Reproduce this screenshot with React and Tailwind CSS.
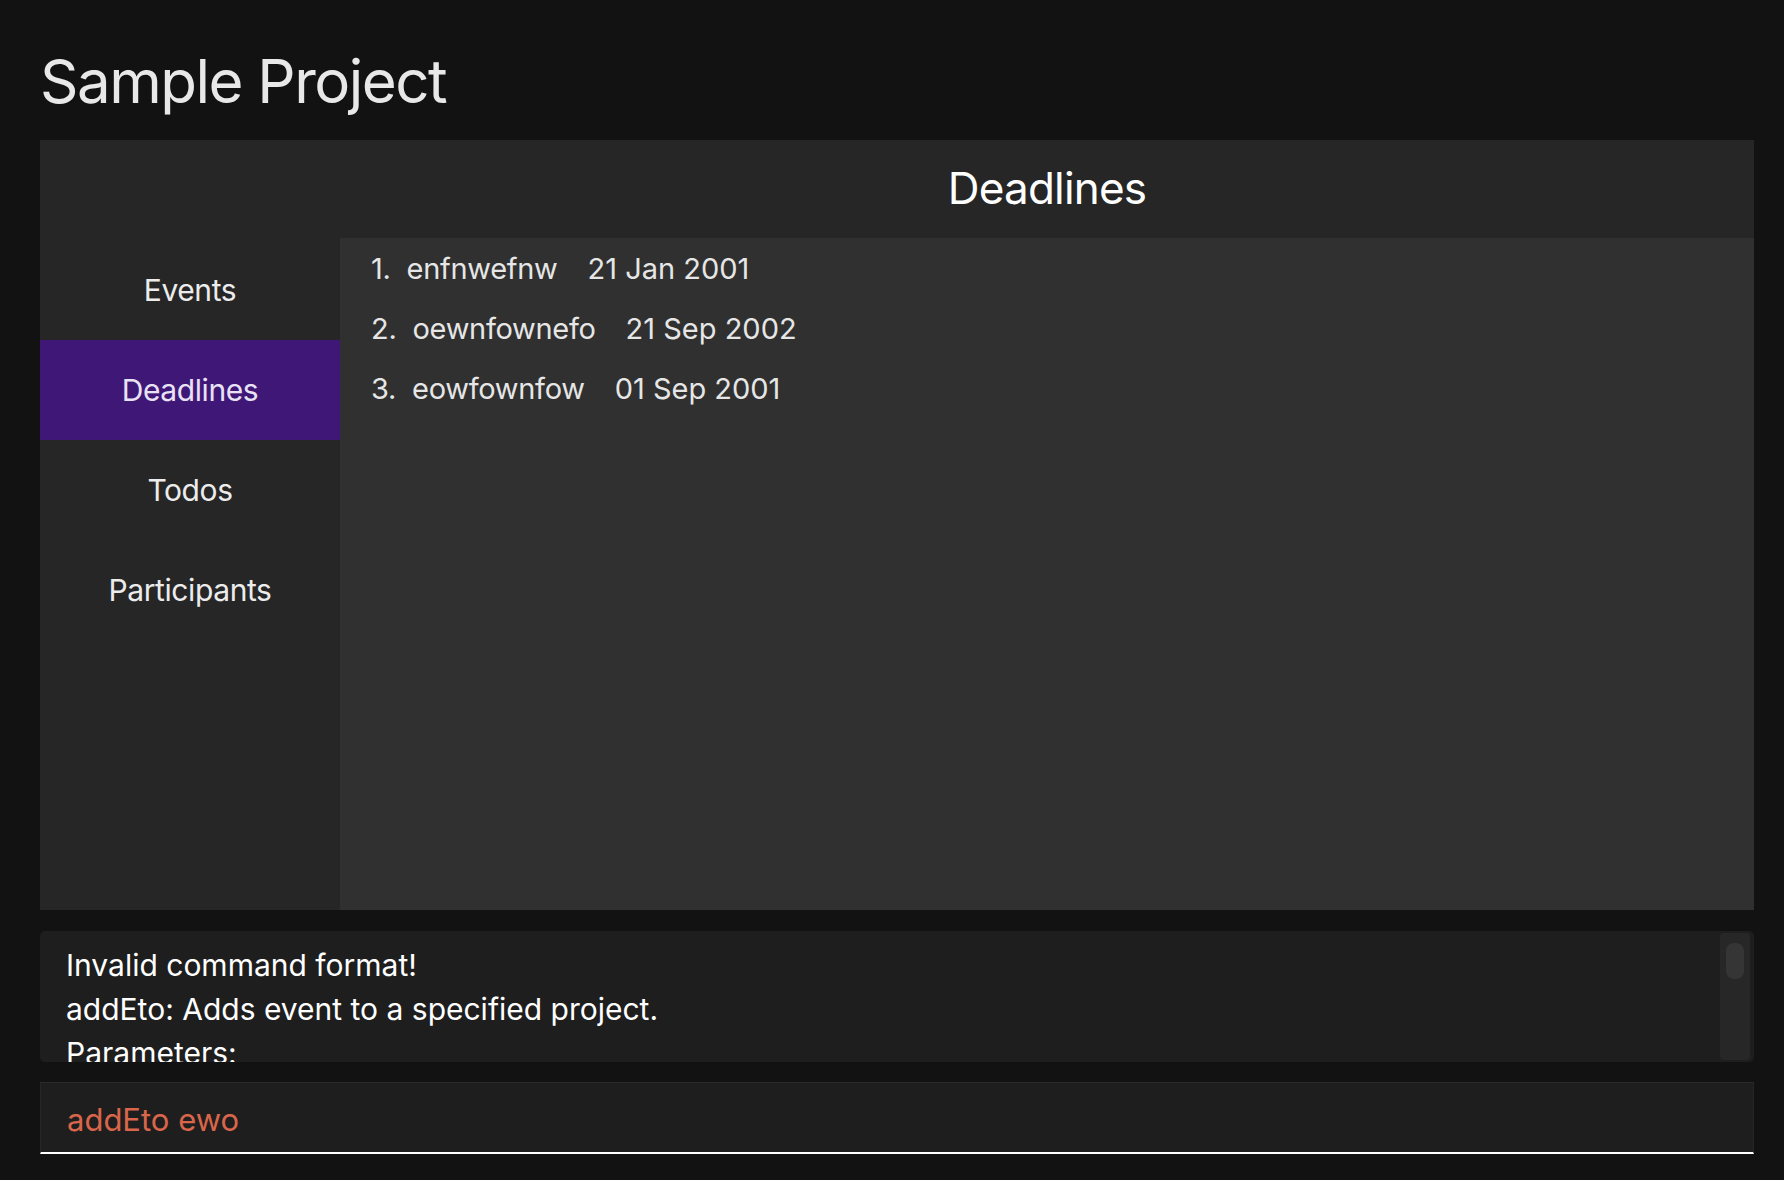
const TABS = ['Events', 'Deadlines', 'Todos', 'Participants'];

const DEADLINES = [
  { name: 'enfnwefnw', date: '21 Jan 2001' },
  { name: 'oewnfownefo', date: '21 Sep 2002' },
  { name: 'eowfownfow', date: '01 Sep 2001' },
];

const FONT = { fontFamily: 'Inter, "Noto Sans", sans-serif' };

export default function App() {
  const active = 'Deadlines';

  return (
    <div style={FONT} className="flex h-[1180px] w-full flex-col bg-[#121212] pr-[30px] pl-[40px] text-white">
      <h1 className="pt-[40px] pb-[17px] text-[60px] leading-[83px] tracking-[-1.5px] text-[#e8e8e8]">Sample Project</h1>

      <section className="flex h-[770px] bg-[#262626]">
        <aside className="flex w-[300px] shrink-0 flex-col pt-[100px]">
          {TABS.map((tab) => (
            <div
              key={tab}
              className={`flex h-[100px] items-center justify-center text-[30px] tracking-[-0.4px] ${active === tab ? 'bg-[#3f1777] text-[#e9e2f5]' : 'text-[#ececec]'}`}
            >
              {tab}
            </div>
          ))}
        </aside>

        <div className="flex min-w-0 flex-1 flex-col">
          <div className="flex h-[98px] shrink-0 items-center justify-center pb-[2px] text-[44px] tracking-[-0.8px] text-white">
            Deadlines
          </div>
          <ol className="flex-1 bg-[#303030] pt-[1px] pl-[31px] text-[29px] leading-[60px] tracking-[-0.3px] text-[#e6e6e6]">
            {DEADLINES.map((d, i) => (
              <li key={d.name} className="flex">
                <span className="mr-[16px]">{i + 1}.</span>
                <span>{d.name}</span>
                <span className="ml-[30px] tracking-[0px]">{d.date}</span>
              </li>
            ))}
          </ol>
        </div>
      </section>

      <div className="mt-[21px] flex h-[131px] rounded-[5px] bg-[#1e1e1e]">
        <div className="min-w-0 flex-1 overflow-hidden pt-[12px] pl-[26px] text-[30px] leading-[44px] text-white">
          <p>Invalid command format!</p>
          <p>addEto: Adds event to a specified project.</p>
          <p>Parameters:</p>
        </div>
        <div className="my-[2px] mr-[4px] w-[30px] rounded-[4px] bg-[#272727] px-[6px] pt-[10px]">
          <div className="h-[36px] rounded-[8px] bg-[#353535]" />
        </div>
      </div>

      <div className="mt-[20px] flex h-[72px] items-center border-x border-t border-b-2 border-x-[#262626] border-t-[#2a2a2a] border-b-white bg-[#1e1e1e] pt-[6px] pl-[26px] text-[31px] text-[#d9664b]">
        addEto ewo
      </div>
    </div>
  );
}
